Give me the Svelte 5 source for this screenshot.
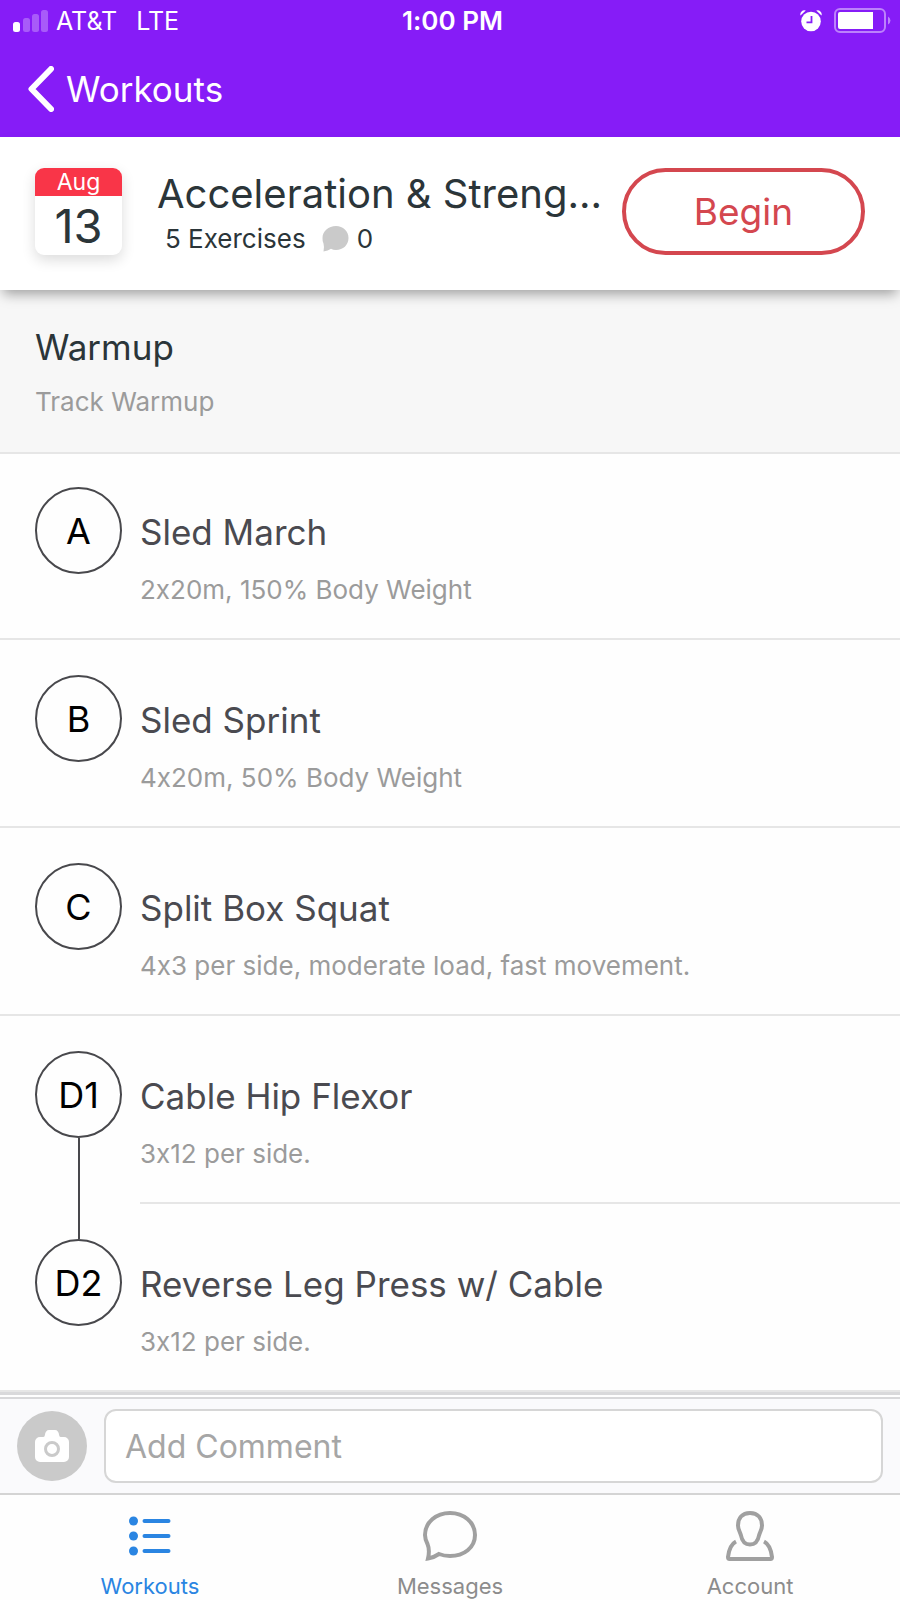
<script>
  const exercises = [
    { id: 'A', name: 'Sled March', detail: '2x20m, 150% Body Weight' },
    { id: 'B', name: 'Sled Sprint', detail: '4x20m, 50% Body Weight' },
    { id: 'C', name: 'Split Box Squat', detail: '4x3 per side, moderate load, fast movement.' },
    { id: 'D1', name: 'Cable Hip Flexor', detail: '3x12 per side.', linkedNext: true },
    { id: 'D2', name: 'Reverse Leg Press w/ Cable', detail: '3x12 per side.', linkedPrev: true }
  ];
  let comment = $state('');
</script>

<div class="screen">
  <header class="top">
    <div class="status">
      <div class="carrier">
        <svg width="36" height="24" viewBox="0 0 36 24" fill="#fff" aria-hidden="true">
          <rect x="0" y="13" width="7" height="10" rx="2.500" />
          <g opacity="0.28">
            <rect x="10" y="9" width="7" height="14" rx="2.500" />
            <rect x="19" y="5" width="7" height="18" rx="2.500" />
            <rect x="28" y="1" width="7" height="22" rx="2.500" />
          </g>
        </svg>
        <span>AT&amp;T</span>
        <span class="network">LTE</span>
      </div>
      <time>1:00 PM</time>
      <div class="indicators">
        <svg width="22" height="22" viewBox="0 0 22 22" aria-hidden="true">
          <path d="M0.500 5.500A4 4 0 0 1 5.800 0.600zM21.500 5.500A4 4 0 0 0 16.200 0.600z" fill="#fff" />
          <circle cx="11" cy="11.500" r="9.800" fill="#fff" />
          <path d="M11.500 6v6.400H6.500" fill="none" stroke="#861cf7" stroke-width="1.800" />
        </svg>
        <svg width="58" height="26" viewBox="0 0 58 26" aria-hidden="true">
          <rect x="1" y="1" width="50" height="23" rx="5" fill="none" stroke="#fff" stroke-opacity="0.450" stroke-width="2" />
          <path d="M6 4h33v17H6a2 2 0 0 1-2-2V6a2 2 0 0 1 2-2z" fill="#fff" />
          <path d="M54 8.500a4.500 4.500 0 0 1 0 8z" fill="#fff" fill-opacity="0.450" />
        </svg>
      </div>
    </div>
    <nav class="navbar">
      <a href="#workouts" class="back">
        <svg width="26" height="46" viewBox="0 0 26 46" aria-hidden="true">
          <path d="M23 3L3.500 23l19.500 20" fill="none" stroke="#fff" stroke-width="6" stroke-linecap="round" stroke-linejoin="round" />
        </svg>
        <span>Workouts</span>
      </a>
    </nav>
  </header>

  <section class="summary">
    <div class="calendar">
      <span class="month">Aug</span>
      <span class="day">13</span>
    </div>
    <div class="summary-text">
      <h1>Acceleration &amp; Streng...</h1>
      <p>
        <span>5 Exercises</span>
        <svg width="27" height="26" viewBox="0 0 27 26" aria-hidden="true">
          <path d="M14 0C21 0 26.500 5 26.500 12S21 24 14 24q-3 0-5-1.200Q6 25 1.500 25.500 2.500 21 1.500 17.500A12 12 0 0 1 0.500 12C0.500 5 6.500 0 14 0z" fill="#cacaca" />
        </svg>
        <span>0</span>
      </p>
    </div>
    <button type="button" class="begin">Begin</button>
  </section>

  <main>
    <section class="warmup">
      <h2>Warmup</h2>
      <p>Track Warmup</p>
    </section>
    <ul class="list">
      {#each exercises as ex (ex.id)}
        <li class="row" class:grouped={ex.linkedNext}>
          <div class="marker">
            <span class="lead" class:wire={ex.linkedPrev}></span>
            <span class="badge">{ex.id}</span>
            <span class="trail" class:wire={ex.linkedNext}></span>
          </div>
          <div class="body">
            <h3>{ex.name}</h3>
            <p>{ex.detail}</p>
          </div>
        </li>
      {/each}
    </ul>
  </main>

  <footer>
    <form class="comment" onsubmit={(e) => e.preventDefault()}>
      <button type="button" class="camera" aria-label="Add photo">
        <svg width="34" height="32" viewBox="0 0 34 32" aria-hidden="true">
          <path d="M5 7h3q1.500 0 1.800-1.500Q10.500 0 14 0h6q3.500 0 4.200 5.500Q24.500 7 26 7h3a5 5 0 0 1 5 5v15a5 5 0 0 1-5 5H5a5 5 0 0 1-5-5V12a5 5 0 0 1 5-5z" fill="#fff" />
          <circle cx="17" cy="19" r="6.500" fill="none" stroke="#cacaca" stroke-width="3" />
        </svg>
      </button>
      <input type="text" aria-label="Add Comment" placeholder="Add Comment" bind:value={comment} />
    </form>
    <nav class="tabs">
      <a href="#workouts" class="active">
        <svg width="54" height="50" viewBox="0 0 54 50" aria-hidden="true">
          <g fill="currentColor">
            <circle cx="10.500" cy="10" r="4.500" />
            <circle cx="10.500" cy="25" r="4.500" />
            <circle cx="10.500" cy="40" r="4.500" />
          </g>
          <path d="M21.500 10h24M21.500 25h24M21.500 40h24" stroke="currentColor" stroke-width="4" stroke-linecap="round" />
        </svg>
        <span>Workouts</span>
      </a>
      <a href="#messages">
        <svg width="54" height="50" viewBox="0 0 54 50" fill="none" stroke="#a0a0a0" stroke-width="4" aria-hidden="true">
          <path d="M27 2C41 2 52 11.500 52 24S41 45 27 45Q21 45 16 43 11 46.500 5 47.500 7 39 4.500 33 2 28 2 24C2 11.500 13 2 27 2z" />
        </svg>
        <span>Messages</span>
      </a>
      <a href="#account">
        <svg width="54" height="50" viewBox="0 0 54 50" fill="none" stroke="#a0a0a0" stroke-width="4" stroke-linejoin="round" aria-hidden="true">
          <path d="M27 2C19 2 15 7.500 15 14.500c0 4 2 6 3 10C19 30 22 33.500 27 33.500s8-3.500 9-9c1-4 3-6 3-10C39 7.500 35 2 27 2z" />
          <path d="M13 30.500C8 33 6 38 5 46q0 2 1.500 2h41q1.500 0 1.500-2C48 38 46 33 41 30.500" />
        </svg>
        <span>Account</span>
      </a>
    </nav>
  </footer>
</div>

<style>
  :global(body) {
    margin: 0;
    background: #fff;
  }
  .screen {
    display: flex;
    flex-direction: column;
    min-height: 100vh;
    font-family: Inter, "Liberation Sans", sans-serif;
    font-feature-settings: "calt" 0;
    color: #2b3539;
    background: #fefefe;
  }
  h1, h2, h3, p, ul {
    margin: 0;
    padding: 0;
    font-weight: 400;
  }
  a {
    color: inherit;
    text-decoration: none;
  }
  svg {
    display: block;
    flex: none;
  }
  button {
    font: inherit;
    padding: 0;
    cursor: pointer;
  }

  .top {
    background: #861cf7;
    color: #fff;
  }
  .status {
    display: grid;
    grid-template-columns: 1fr auto 1fr;
    align-items: center;
    height: 41px;
    padding: 0 8px 0 13px;
    font-size: 26px;
    line-height: 32px;
  }
  .status time {
    font-weight: 600;
  }
  .carrier {
    display: flex;
    align-items: center;
    gap: 7px;
    font-size: 25px;
  }
  .network {
    margin-left: 12px;
  }
  .indicators {
    display: flex;
    align-items: center;
    justify-content: flex-end;
    gap: 12px;
  }
  .navbar {
    display: flex;
    align-items: center;
    height: 96px;
    padding: 0 28px;
  }
  .back {
    display: flex;
    align-items: center;
    gap: 12px;
    font-size: 35px;
    line-height: 44px;
  }

  .summary {
    position: relative;
    display: flex;
    align-items: center;
    padding: 31px 35px 35px 35px;
    background: #fff;
    box-shadow: 0 7px 12px -3px rgba(0, 0, 0, 0.360);
  }
  .calendar {
    display: flex;
    flex: none;
    flex-direction: column;
    width: 87px;
    height: 87px;
    border-radius: 9px;
    overflow: hidden;
    text-align: center;
    background: #fff;
    box-shadow: 0 5px 14px rgba(0, 0, 0, 0.140);
  }
  .month {
    background: #f93548;
    color: #fff;
    font-size: 23px;
    line-height: 28px;
  }
  .day {
    font-size: 47px;
    line-height: 60px;
  }
  .summary-text {
    display: flex;
    flex: 1;
    flex-direction: column;
    gap: 7px;
    min-width: 0;
    margin: 0 16px 0 35px;
  }
  h1 {
    font-size: 40px;
    line-height: 48px;
    white-space: nowrap;
    overflow: hidden;
  }
  .summary-text p {
    display: flex;
    align-items: center;
    padding-left: 8px;
    font-size: 26px;
    line-height: 28px;
  }
  .summary-text p svg {
    margin: 0 8px 0 16px;
  }
  .begin {
    box-sizing: border-box;
    flex: none;
    width: 243px;
    height: 87px;
    border: 4px solid #d4474f;
    border-radius: 44px;
    background: #fff;
    color: #d4474f;
    font-size: 37px;
    line-height: 44px;
  }

  .warmup {
    padding: 35px 35px 34px;
    border-bottom: 2px solid #e6e6e6;
    background: #f7f7f7;
  }
  h2, h3 {
    font-size: 35px;
    line-height: 44px;
  }
  .warmup p {
    margin-top: 17px;
    font-size: 26px;
    line-height: 32px;
    color: #9b9b9b;
  }
  .list {
    list-style: none;
    border-bottom: 3px solid #d9d9db;
  }
  .row {
    display: flex;
    gap: 18px;
    padding-left: 35px;
    border-bottom: 2px solid #e6e6e6;
  }
  .row.grouped {
    border-bottom: 0;
  }
  .marker {
    display: flex;
    flex: none;
    flex-direction: column;
    align-items: center;
  }
  .lead, .trail {
    width: 2px;
  }
  .lead {
    height: 35px;
  }
  .row:first-child .lead {
    height: 33px;
  }
  .trail {
    flex: 1;
  }
  .wire {
    background: #48484c;
  }
  .badge {
    display: flex;
    align-items: center;
    justify-content: center;
    box-sizing: border-box;
    width: 87px;
    height: 87px;
    border: 2px solid #48484c;
    border-radius: 50%;
    color: #000;
    font-size: 36px;
    line-height: 44px;
  }
  .body {
    flex: 1;
    min-width: 0;
    padding: 58px 24px 32px 0;
  }
  .row:first-child .body {
    padding-top: 56px;
  }
  .grouped .body {
    border-bottom: 2px solid #e6e6e6;
  }
  h3 {
    color: #4a4a50;
  }
  .body p {
    margin-top: 20px;
    font-size: 26px;
    line-height: 32px;
    color: #9b9b9b;
  }

  footer {
    margin-top: auto;
    background: #fefefe;
  }
  .comment {
    display: flex;
    align-items: center;
    gap: 17px;
    padding: 10px 17px;
    border-top: 2px solid #d8d8da;
    background: #fafafc;
  }
  .camera {
    display: flex;
    flex: none;
    align-items: center;
    justify-content: center;
    width: 70px;
    height: 70px;
    border: 0;
    border-radius: 50%;
    background: #cacaca;
  }
  .comment input {
    box-sizing: border-box;
    flex: 1;
    min-width: 0;
    height: 74px;
    padding: 0 19px;
    border: 2px solid #d6d6d6;
    border-radius: 12px;
    background: #fff;
    font: inherit;
    font-size: 32px;
    color: #2b3539;
  }
  .comment input::placeholder {
    color: #a6a6a6;
    opacity: 1;
  }
  .tabs {
    display: grid;
    grid-template-columns: repeat(3, 1fr);
    border-top: 2px solid #d4d4d4;
    color: #8c8c8c;
    font-size: 22px;
    line-height: 28px;
  }
  .tabs a {
    display: flex;
    flex-direction: column;
    align-items: center;
    gap: 11px;
    padding: 16px 0 0;
  }
  .tabs .active {
    color: #2a85e2;
  }
</style>
